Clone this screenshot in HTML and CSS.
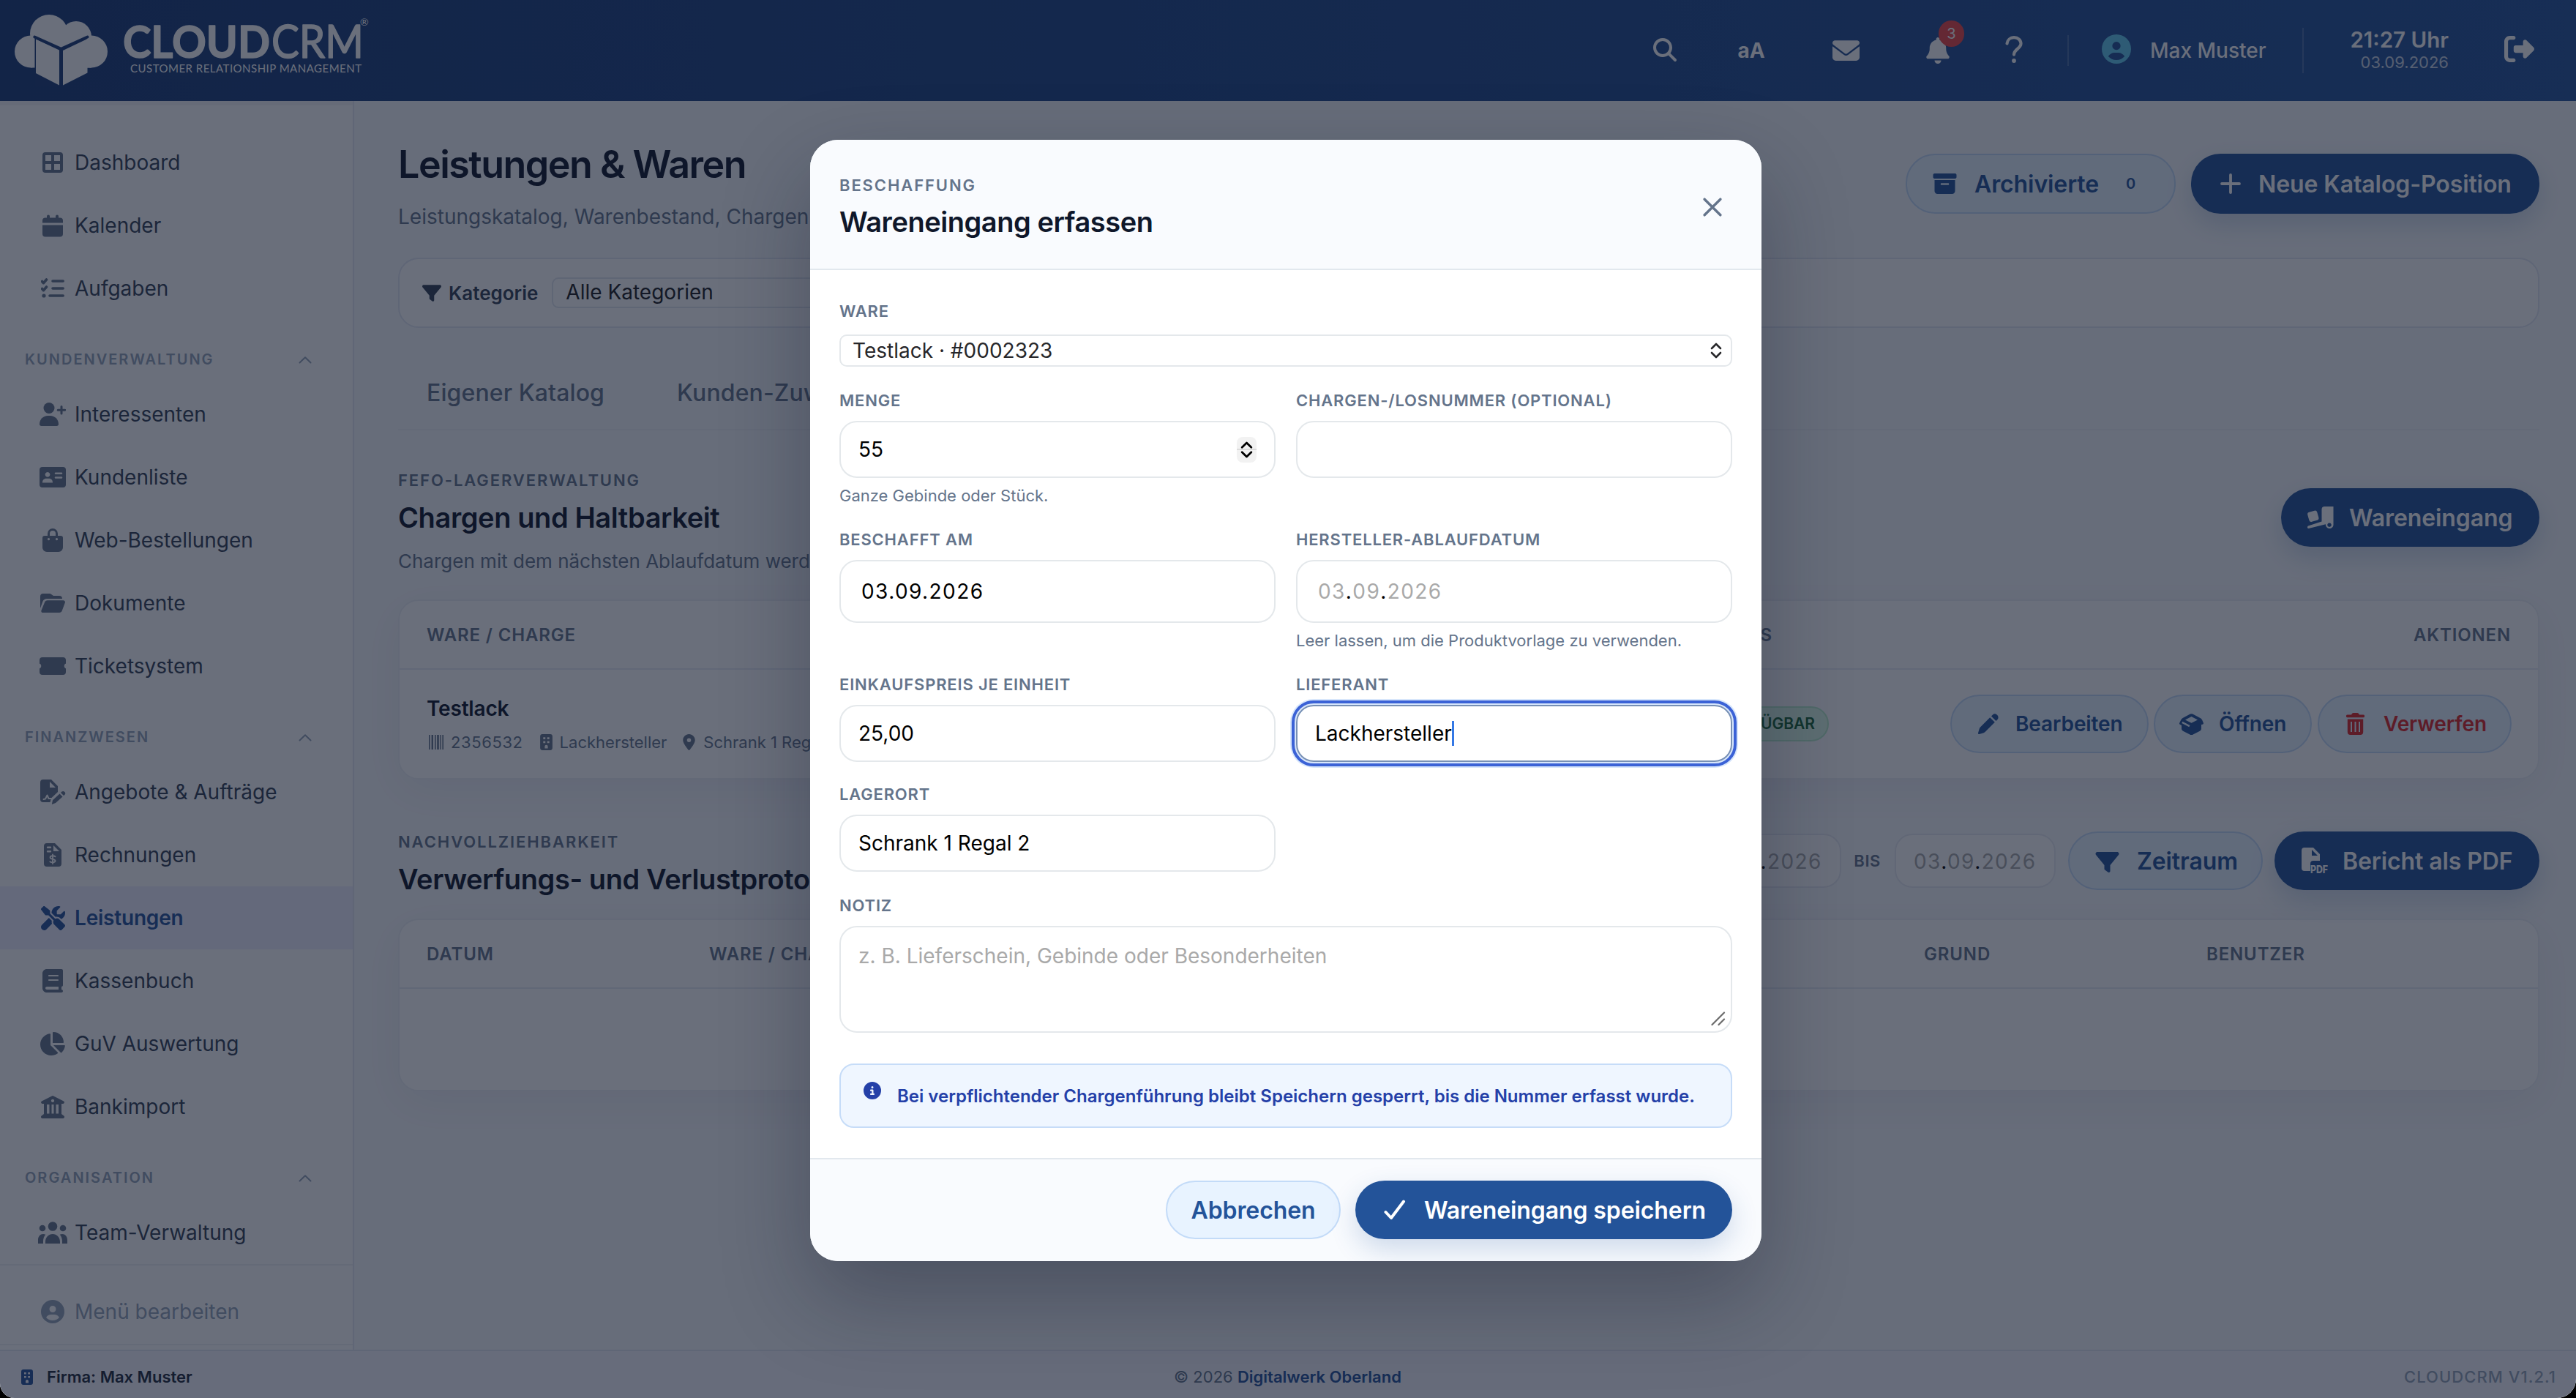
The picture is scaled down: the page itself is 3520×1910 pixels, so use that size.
FILE: index.html
```html
<!DOCTYPE html>
<html lang="de">
<head>
<meta charset="utf-8">
<title>CloudCRM – Leistungen &amp; Waren</title>
<link rel="stylesheet" href="styles.css">
</head>
<body>
<svg class="sprite" aria-hidden="true">
  <symbol id="i-search" viewBox="0 0 512 512"><path d="M416 208c0 45.900-14.900 88.300-40 122.700L502.600 457.400c12.500 12.500 12.500 32.800 0 45.300s-32.800 12.500-45.300 0L330.700 376c-34.400 25.200-76.800 40-122.700 40C93.100 416 0 322.900 0 208S93.100 0 208 0S416 93.100 416 208zM208 352a144 144 0 1 0 0-288 144 144 0 1 0 0 288z"/></symbol>
  <symbol id="i-mail" viewBox="0 64 512 384"><path d="M48 64C21.500 64 0 85.500 0 112c0 15.100 7.100 29.300 19.200 38.400L236.800 313.600c11.400 8.500 27 8.500 38.400 0L492.800 150.400c12.100-9.100 19.200-23.300 19.200-38.400c0-26.500-21.500-48-48-48L48 64zM0 176L0 384c0 35.300 28.700 64 64 64l384 0c35.300 0 64-28.700 64-64l0-208L294.400 339.200c-22.800 17.100-54 17.100-76.800 0L0 176z"/></symbol>
  <symbol id="i-bell" viewBox="0 0 448 512"><path d="M224 0c-17.700 0-32 14.300-32 32l0 19.200C119 66 64 130.600 64 208l0 18.800c0 47-17.300 92.400-48.500 127.600l-7.400 8.300c-8.400 9.400-10.400 22.900-5.300 34.400S19.400 416 32 416l384 0c12.600 0 24-7.400 29.200-18.900s3.100-25-5.300-34.400l-7.400-8.300C401.300 319.200 384 273.900 384 226.800l0-18.800c0-77.400-55-142-128-156.800L256 32c0-17.700-14.300-32-32-32zm45.300 493.300c12-12 18.700-28.300 18.700-45.300l-64 0-64 0c0 17 6.700 33.300 18.700 45.300s28.300 18.700 45.300 18.700s33.300-6.700 45.300-18.700z"/></symbol>
  <symbol id="i-question" viewBox="0 0 24 38"><path d="M2.500 10.500C3 5.500 7 2.200 12 2.200c5.500 0 9.500 3.600 9.500 8.400 0 7-9.500 7.400-9.500 15" fill="none" stroke="currentColor" stroke-width="4.200" stroke-linecap="round"/><circle cx="12" cy="34" r="2.900"/></symbol>
  <symbol id="i-user-circle" viewBox="0 0 512 512"><path d="M399 384.200C376.900 345.800 335.400 320 288 320l-64 0c-47.400 0-88.900 25.800-111 64.200c35.200 39.200 86.200 63.800 143 63.800s107.800-24.700 143-63.800zM0 256a256 256 0 1 1 512 0A256 256 0 1 1 0 256zm256 16a72 72 0 1 0 0-144 72 72 0 1 0 0 144z"/></symbol>
  <symbol id="i-logout" viewBox="0 32 512 448"><path d="M377.900 105.900L500.700 228.700c7.200 7.200 11.300 17.100 11.300 27.300s-4.100 20.100-11.300 27.300L377.900 406.100c-6.400 6.400-15 9.900-24 9.900c-18.700 0-33.900-15.200-33.900-33.900l0-62.100-128 0c-17.700 0-32-14.300-32-32l0-64c0-17.700 14.300-32 32-32l128 0 0-62.100c0-18.700 15.200-33.900 33.900-33.900c9 0 17.600 3.600 24 9.900zM160 96L96 96c-17.700 0-32 14.300-32 32l0 256c0 17.700 14.300 32 32 32l64 0c17.700 0 32 14.300 32 32s-14.300 32-32 32l-64 0c-53 0-96-43-96-96L0 128C0 75 43 32 96 32l64 0c17.700 0 32 14.300 32 32s-14.300 32-32 32z"/></symbol>
  <symbol id="i-grid" viewBox="0 0 28 28"><path fill-rule="evenodd" d="M4 0h20a4 4 0 0 1 4 4v20a4 4 0 0 1-4 4H4a4 4 0 0 1-4-4V4a4 4 0 0 1 4-4zM4 4v8h8V4zM16 4v8h8V4zM4 16v8h8v-8zM16 16v8h8v-8z"/></symbol>
  <symbol id="i-calendar" viewBox="0 0 28 30"><path d="M6 2a2 2 0 0 1 4 0v2h8V2a2 2 0 0 1 4 0v2h2a4 4 0 0 1 4 4v3H0V8a4 4 0 0 1 4-4h2zM0 14h28v12a4 4 0 0 1-4 4H4a4 4 0 0 1-4-4z"/></symbol>
  <symbol id="i-tasks" viewBox="0 0 32 28"><path d="M1.500 4.500l2 2.200L7.500 2M1.500 14.500l2 2.200L7.500 12M16 4h14.200M16 14h14.200M12 24h18.200" fill="none" stroke="currentColor" stroke-width="3.600" stroke-linecap="round" stroke-linejoin="round"/><circle cx="4" cy="24" r="2.600"/></symbol>
  <symbol id="i-user-plus" viewBox="0 0 36 32"><circle cx="13" cy="7.500" r="7.500"/><path d="M0 29.500C0 23 5 18 11.500 18h3C21 18 26 23 26 29.500c0 1.400-1 2.500-2.500 2.500h-21C1 32 0 30.900 0 29.500z"/><path d="M30 5.500v9.500M25.200 10.200h9.500" stroke="currentColor" stroke-width="3" stroke-linecap="round"/></symbol>
  <symbol id="i-id" viewBox="0 0 36 28"><path fill-rule="evenodd" d="M4 0h28a4 4 0 0 1 4 4v20a4 4 0 0 1-4 4H4a4 4 0 0 1-4-4V4a4 4 0 0 1 4-4zM11 7a3.400 3.400 0 1 0 .01 0zM4 21.500h14c0-3.500-2-5.700-5-5.700H9c-3 0-5 2.200-5 5.700zM22 7.500a1 1 0 0 0 0 2.600h8a1 1 0 0 0 0-2.600zM22 13.200a1 1 0 0 0 0 2.600h8a1 1 0 0 0 0-2.600z"/></symbol>
  <symbol id="i-bag" viewBox="0 0 28 32"><path fill-rule="evenodd" d="M7 10V7a7 7 0 0 1 14 0v3h4a3 3 0 0 1 3 3v13a6 6 0 0 1-6 6H6a6 6 0 0 1-6-6V13a3 3 0 0 1 3-3zM10 10h8V7a4 4 0 0 0-8 0zM8.500 13a1.600 1.600 0 1 0 .01 0zM19.500 13a1.600 1.600 0 1 0 .01 0z"/></symbol>
  <symbol id="i-folder" viewBox="0 0 34 26"><path d="M0 20V4a4 4 0 0 1 4-4h8c1.500 0 2.500.5 3.500 1.300L18 3h8a4 4 0 0 1 4 4H9C6.500 7 4.500 8.300 3.500 10.500z"/><path d="M1.500 23L6 12c.7-1.800 2-2.800 4-2.800h21.500c1.800 0 2.900 1.500 2.300 3.200l-4 10.800c-.6 1.800-2 2.800-3.800 2.800H3.500c-1.600 0-2.600-1.500-2-3z"/></symbol>
  <symbol id="i-ticket" viewBox="0 0 36 24"><path d="M4 0h28a4 4 0 0 1 4 4v4.500a3.800 3.800 0 0 0 0 7V20a4 4 0 0 1-4 4H4a4 4 0 0 1-4-4v-4.500a3.800 3.800 0 0 0 0-7V4a4 4 0 0 1 4-4z"/></symbol>
  <symbol id="i-sign" viewBox="0 0 35 34"><path fill-rule="evenodd" d="M4 0h11l9 9v8l-9 8.500L13.500 31H4a4 4 0 0 1-4-4V4a4 4 0 0 1 4-4zM13 3v8h8z"/><path d="M4.500 27l2.500-.5 2.500-5 2 4.500h3.500" fill="none" stroke="#fff" stroke-width="2" stroke-linecap="round" stroke-linejoin="round"/><path d="M17 28.200L26.500 19.500l4 4L21 32l-5.200 2zM28 18l1.500-1.500c2.500-2 6.500 1.500 4 4.200L32 22z"/></symbol>
  <symbol id="i-invoice" viewBox="0 0 24 32"><path fill-rule="evenodd" d="M4 0h11l9 9v19a4 4 0 0 1-4 4H4a4 4 0 0 1-4-4V4a4 4 0 0 1 4-4zM13 3v8h8zM5 4.500a1.200 1.200 0 0 0 0 2.400h4a1.200 1.200 0 0 0 0-2.400zM5 10a1.200 1.200 0 0 0 0 2.400h4A1.200 1.200 0 0 0 9 10z"/><path d="M15.500 18.300c-1-.8-2.200-1-3.500-1-2 0-3.400.8-3.400 2.200 0 3.400 6.900 1.400 6.900 4.600 0 1.500-1.500 2.200-3.500 2.200-1.300 0-2.600-.3-3.600-1.100M12 15.500v12.500" fill="none" stroke="#fff" stroke-width="1.900" stroke-linecap="round"/></symbol>
  <symbol id="i-tools" viewBox="0 0 512 512"><path d="M78.600 5C69.100-2.400 55.600-1.500 47 7L7 47c-8.500 8.500-9.400 22-2.100 31.600l80 104c4.500 5.900 11.600 9.400 19 9.400l54.100 0 109 109c-14.700 29-10 65.400 14.300 89.600l112 112c12.500 12.500 32.800 12.500 45.300 0l64-64c12.500-12.500 12.500-32.800 0-45.300l-112-112c-24.200-24.200-60.600-29-89.600-14.300l-109-109 0-54.100c0-7.500-3.500-14.500-9.400-19L78.600 5zM19.900 396.100C7.200 408.800 0 426.100 0 444.100C0 481.600 30.400 512 67.900 512c18 0 35.300-7.200 48-19.900L233.700 374.300c-7.800-20.900-9-43.600-3.600-65.100l-61.700-61.700L19.900 396.100zM512 144c0-10.500-1.100-20.700-3.200-30.500c-2.400-11.200-16.100-14.100-24.200-6l-63.900 63.900c-3 3-7.100 4.700-11.300 4.700L352 176c-8.800 0-16-7.200-16-16l0-57.400c0-4.200 1.700-8.300 4.700-11.300l63.900-63.900c8.100-8.100 5.200-21.800-6-24.200C388.700 1.100 378.500 0 368 0C288.500 0 224 64.500 224 144l0 .8 85.300 85.300c36-9.100 75.800 .5 104 28.700L429 274.500c49-23 83-72.800 83-130.500z"/></symbol>
  <symbol id="i-book" viewBox="0 0 448 512"><path d="M96 0C43 0 0 43 0 96L0 416c0 53 43 96 96 96l288 0 32 0c17.700 0 32-14.300 32-32s-14.300-32-32-32l0-64c17.700 0 32-14.300 32-32l0-320c0-17.700-14.300-32-32-32L384 0 96 0zm0 384l256 0 0 64L96 448c-17.700 0-32-14.300-32-32s14.300-32 32-32zm32-240c0-8.800 7.200-16 16-16l192 0c8.800 0 16 7.200 16 16s-7.200 16-16 16l-192 0c-8.800 0-16-7.200-16-16zm16 78l192 0c8.800 0 16 7.200 16 16s-7.200 16-16 16l-192 0c-8.800 0-16-7.200-16-16s7.200-16 16-16z"/></symbol>
  <symbol id="i-pie" viewBox="32 0 544 512"><path d="M304 240l0-223.400c0-9 7-16.600 16-16.600C443.700 0 544 100.300 544 224c0 9-7.600 16-16.600 16L304 240zM32 272C32 150.700 122.100 50.300 239 34.300c9.200-1.300 17 6.100 17 15.400L256 288 412.500 444.500c6.700 6.700 6.200 17.700-1.500 23.100C371.800 495.600 323.800 512 272 512C139.500 512 32 404.600 32 272zm526.400 16c9.300 0 16.600 7.800 15.400 17c-7.700 55.900-34.600 105.600-73.900 142.300c-6 5.600-15.400 5.200-21.200-.7L320 288l238.400 0z"/></symbol>
  <symbol id="i-bank" viewBox="0 0 32 31"><path fill-rule="evenodd" d="M14.800.4a2.600 2.600 0 0 1 2.400 0L31 7.500c1.600.9 1 3.500-1 3.500H28v14l3.300 2.400c1.500 1.300.7 3.600-1.300 3.600H2c-2 0-2.800-2.300-1.300-3.600L4 25V11H2C0 11 -.6 8.400 1 7.500zM16 4.800a2.100 2.100 0 1 0 .01 0zM8 12v12.500h3.500V12zM14.500 12v12.500h3V12zM20.500 12v12.500H24V12z"/></symbol>
  <symbol id="i-team" viewBox="0 0 40 30"><circle cx="20" cy="6.500" r="6.300"/><circle cx="6" cy="9" r="4.300"/><circle cx="34" cy="9" r="4.300"/><path d="M10 30v-2.500C10 21.500 14.500 17 20 17s10 4.500 10 10.500V30zM0 30v-5c0-4.600 3-8 7-8 1.200 0 2.300.3 3.200.8C8 20.300 7 23.500 7 27v3zM40 30v-5c0-4.600-3-8-7-8-1.200 0-2.300.3-3.200.8C32 20.300 33 23.500 33 27v3z"/></symbol>
  <symbol id="i-chevron" viewBox="0 0 18 11"><path d="M1.500 9.500L9 2.200l7.500 7.300" fill="none" stroke="currentColor" stroke-width="2" stroke-linecap="round" stroke-linejoin="round"/></symbol>
  <symbol id="i-building" viewBox="0 0 16 21"><path fill-rule="evenodd" d="M3 0h10a3 3 0 0 1 3 3v15a3 3 0 0 1-3 3H3a3 3 0 0 1-3-3V3a3 3 0 0 1 3-3zM4 4v2.600h2.800V4zM9.200 4v2.600H12V4zM4 9v2.600h2.800V9zM9.200 9v2.600H12V9zM6 18.500h4V16a2 2 0 0 0-4 0z"/></symbol>
  <symbol id="i-archive" viewBox="0 32 512 448"><path d="M32 32l448 0c17.700 0 32 14.300 32 32l0 48c0 17.700-14.300 32-32 32L32 144C14.300 144 0 129.700 0 112L0 64C0 46.300 14.300 32 32 32zm0 144l448 0 0 240c0 35.300-28.700 64-64 64L96 480c-35.300 0-64-28.700-64-64l0-240zm132 88c0 12 8 20 20 20l144 0c12 0 20-8 20-20s-8-20-20-20l-144 0c-12 0-20 8-20 20z"/></symbol>
  <symbol id="i-plus" viewBox="0 0 28 28"><path d="M14 2v24M2 14h24" stroke="currentColor" stroke-width="3.800" stroke-linecap="round"/></symbol>
  <symbol id="i-filter" viewBox="0 32 512 448"><path d="M3.900 54.900C10.500 40.900 24.500 32 40 32l432 0c15.500 0 29.500 8.900 36.100 22.900s4.600 30.500-5.200 42.500L320 320.900 320 448c0 12.100-6.800 23.200-17.700 28.600s-23.800 4.300-33.500-3l-64-48c-8.100-6-12.800-15.500-12.800-25.600l0-79.100L9 97.300C-.7 85.400-2.800 68.800 3.900 54.900z"/></symbol>
  <symbol id="i-truck" viewBox="0 0 36 30"><path fill-rule="evenodd" d="M24 0h12v25.500a5 5 0 1 1-10.500-1.300L2.300 29.900C.6 30.300-.4 27.400 1.500 26.600L20 20.500V4a4 4 0 0 1 4-4zM30.500 22.500a2.700 2.700 0 1 0 .01 0z"/><rect x="1.500" y="6.500" width="13.500" height="13.500" rx="3" transform="rotate(-16 8 13)"/></symbol>
  <symbol id="i-barcode" viewBox="0 0 20 20"><path d="M0 0h1.600v20H0zM3.600 0h2.400v20H3.600zM8 0h1.600v20H8zM11.200 0h2.600v20h-2.600zM15.200 0h1.400v20h-1.400zM18.400 0H20v20h-1.600z"/></symbol>
  <symbol id="i-pin" viewBox="0 0 384 512"><path d="M215.700 499.200C267 435 384 279.400 384 192C384 86 298 0 192 0S0 86 0 192c0 87.400 117 243 168.300 307.200c12.300 15.300 35.100 15.300 47.400 0zM192 128a64 64 0 1 1 0 128 64 64 0 1 1 0-128z"/></symbol>
  <symbol id="i-pen" viewBox="0 0 28 28"><path d="M16.200 5.200l6.600 6.600-13 13c-.8.800-1.700 1.300-2.800 1.600L1.500 28c-1 .2-1.800-.5-1.500-1.500l1.600-5.600c.3-1 .8-2 1.600-2.700zM18 3.400l2-2c4-3.500 10 2.500 6.500 6.600l-2 2z"/></symbol>
  <symbol id="i-boxopen" viewBox="0 0 33 29"><path fill-rule="evenodd" d="M14.800.6a3.600 3.600 0 0 1 3.400 0L28.500 6c1.200.6 2.200 1.800 2.800 3l1.400 3.300c.6 1.300 0 2.300-1.200 2.500L30 15v5.500c0 1.400-.7 2.500-2 3.200l-9.800 5a3.600 3.600 0 0 1-3.400 0l-9.800-5c-1.300-.7-2-1.800-2-3.200V16l-1.800-1c-1.100-.6-1.500-1.500-.9-2.600L2 9c.6-1.300 1.400-2.300 2.600-3zM16.500 4L8 8.400l8.500 4.300L25 8.400zM4.300 10.700l-1 2.300 10 5.200 1.200-2.300z"/></symbol>
  <symbol id="i-trash" viewBox="0 0 25 30"><path fill-rule="evenodd" d="M7 2.600L8 .9C8.400.3 9 0 9.700 0h5.600c.7 0 1.300.3 1.700.9l1 1.700h5.300a1.800 1.800 0 0 1 0 3.600H1.700a1.800 1.800 0 0 1 0-3.600zM1.800 8.500h21.400V26a4 4 0 0 1-4 4H5.800a4 4 0 0 1-4-4zM6 12v14h2V12zM11.500 12v14h2V12zM17 12v14h2V12z"/></symbol>
  <symbol id="i-pdf" viewBox="0 0 36 36"><path fill-rule="evenodd" d="M4 0h12l9 9v9h-9a4 4 0 0 0-4 4v10H4a4 4 0 0 1-4-4V4a4 4 0 0 1 4-4zM14 3v8h8z"/><text x="12" y="35" class="pdf-label" textLength="24" lengthAdjust="spacingAndGlyphs">PDF</text></symbol>
  <symbol id="i-updown" viewBox="0 0 16 22"><path d="M2 8l6-6 6 6M2 14l6 6 6-6" fill="none" stroke="currentColor" stroke-width="2.600" stroke-linecap="round" stroke-linejoin="round"/></symbol>
  <symbol id="i-close" viewBox="0 0 24 24"><path d="M2 2l20 20M22 2L2 22" stroke="currentColor" stroke-width="3.200" stroke-linecap="round"/></symbol>
  <symbol id="i-check" viewBox="0 0 30 28"><path d="M2.500 17l7.500 8L27 2.500" fill="none" stroke="currentColor" stroke-width="4" stroke-linecap="round" stroke-linejoin="round"/></symbol>
  <symbol id="i-info" viewBox="0 0 512 512"><path d="M256 512A256 256 0 1 0 256 0a256 256 0 1 0 0 512zM216 336l24 0 0-64-24 0c-13.300 0-24-10.700-24-24s10.700-24 24-24l48 0c13.300 0 24 10.700 24 24l0 88 8 0c13.300 0 24 10.700 24 24s-10.700 24-24 24l-80 0c-13.300 0-24-10.700-24-24s10.700-24 24-24zm40-208a32 32 0 1 1 0 64 32 32 0 1 1 0-64z"/></symbol>
  <symbol id="i-grip" viewBox="0 0 20 20"><path d="M1.500 18L18 1.500M10.500 18L18 10.500" stroke="currentColor" stroke-width="2.200" stroke-linecap="round"/></symbol>
</svg>

<div class="app">
  <header class="topbar">
    <div class="logo">
      <svg class="logo-mark" viewBox="0 0 127 97">
        <g fill="#fff"><circle cx="22" cy="50.500" r="22"/><circle cx="47" cy="26" r="26"/><circle cx="84" cy="30" r="21"/><circle cx="105" cy="50.500" r="22"/><path d="M22 30h83v42.500H22z"/></g>
        <path class="logo-cut" d="M27.500 97V31.500L63 46.500 98.500 31.500V56L63 97z"/>
        <path d="M27.500 29L64 46 100 30.500V54H27.500z" fill="#fff" opacity="0"/>
        <path d="M29 33.500L61 48.500V96.500L29 80zM66 49L99.500 33V79.500L66 96.500z" fill="#fff"/>
        <path d="M98.500 34.500h6V72.500h-6z" fill="#fff"/>
        <path d="M27.300 30.500L63.500 46.800 99.500 30.500" class="logo-line"/>
      </svg>
      <svg class="logo-word" viewBox="0 0 340 80">
        <text x="1" y="59" class="lw-cloud" textLength="201" lengthAdjust="spacingAndGlyphs">CLOUD</text>
        <text x="204" y="59" class="lw-crm" textLength="126" lengthAdjust="spacingAndGlyphs">CRM</text>
        <text x="11" y="79" class="lw-sub" textLength="316" lengthAdjust="spacing">CUSTOMER RELATIONSHIP MANAGEMENT</text>
        <text x="325" y="15" class="lw-reg">®</text>
      </svg>
    </div>
    <div class="tools">
      <div class="slot slot-search"><svg class="ic s32"><use href="#i-search"/></svg></div>
      <div class="slot slot-aa">aA</div>
      <div class="slot slot-mail"><svg class="ic s-mail"><use href="#i-mail"/></svg></div>
      <div class="slot slot-bell"><svg class="ic s-bell"><use href="#i-bell"/></svg><span class="bell-badge">3</span></div>
      <div class="slot slot-q"><svg class="ic s-q"><use href="#i-question"/></svg></div>
      <i class="vline short"></i>
      <svg class="ic avatar"><use href="#i-user-circle"/></svg>
      <span class="user">Max Muster</span>
      <i class="vline long"></i>
      <div class="clock"><b>21:27 Uhr</b><span>03.09.2026</span></div>
      <svg class="ic logout"><use href="#i-logout"/></svg>
    </div>
  </header>

  <div class="middle">
    <nav class="side">
      <a class="nav"><span class="ni"><svg class="ic" style="width:28px;height:28px"><use href="#i-grid"/></svg></span>Dashboard</a>
      <a class="nav"><span class="ni"><svg class="ic" style="width:28px;height:31px"><use href="#i-calendar"/></svg></span>Kalender</a>
      <a class="nav"><span class="ni"><svg class="ic" style="width:32px;height:28px"><use href="#i-tasks"/></svg></span>Aufgaben</a>
      <div class="nav-head">KUNDENVERWALTUNG<svg class="ic chev"><use href="#i-chevron"/></svg></div>
      <a class="nav"><span class="ni"><svg class="ic" style="width:36px;height:32px"><use href="#i-user-plus"/></svg></span>Interessenten</a>
      <a class="nav"><span class="ni"><svg class="ic" style="width:36px;height:28px"><use href="#i-id"/></svg></span>Kundenliste</a>
      <a class="nav"><span class="ni"><svg class="ic" style="width:28px;height:32px"><use href="#i-bag"/></svg></span>Web-Bestellungen</a>
      <a class="nav"><span class="ni"><svg class="ic" style="width:34px;height:26px"><use href="#i-folder"/></svg></span>Dokumente</a>
      <a class="nav"><span class="ni"><svg class="ic" style="width:36px;height:24px"><use href="#i-ticket"/></svg></span>Ticketsystem</a>
      <div class="nav-head">FINANZWESEN<svg class="ic chev"><use href="#i-chevron"/></svg></div>
      <a class="nav"><span class="ni"><svg class="ic" style="width:35px;height:34px"><use href="#i-sign"/></svg></span>Angebote &amp; Aufträge</a>
      <a class="nav"><span class="ni"><svg class="ic" style="width:24px;height:32px"><use href="#i-invoice"/></svg></span>Rechnungen</a>
      <a class="nav active"><span class="ni"><svg class="ic" style="width:33px;height:33px"><use href="#i-tools"/></svg></span>Leistungen</a>
      <a class="nav"><span class="ni"><svg class="ic" style="width:28px;height:32px"><use href="#i-book"/></svg></span>Kassenbuch</a>
      <a class="nav"><span class="ni"><svg class="ic" style="width:34px;height:32px"><use href="#i-pie"/></svg></span>GuV Auswertung</a>
      <a class="nav"><span class="ni"><svg class="ic" style="width:32px;height:31px"><use href="#i-bank"/></svg></span>Bankimport</a>
      <div class="nav-head">ORGANISATION<svg class="ic chev"><use href="#i-chevron"/></svg></div>
      <a class="nav"><span class="ni"><svg class="ic" style="width:40px;height:30px"><use href="#i-team"/></svg></span>Team-Verwaltung</a>
      <div class="nav-edit"><span class="ni"><svg class="ic" style="width:32px;height:32px"><use href="#i-user-circle"/></svg></span>Menü bearbeiten</div>
    </nav>

    <main class="main">
      <div class="page-head">
        <div>
          <h1>Leistungen &amp; Waren</h1>
          <p class="sub">Leistungskatalog, Warenbestand, Chargen</p>
        </div>
        <div class="head-actions">
          <button class="btn soft b-arch"><svg class="ic"><use href="#i-archive"/></svg>Archivierte<small>0</small></button>
          <button class="btn primary b-new"><svg class="ic"><use href="#i-plus"/></svg>Neue Katalog-Position</button>
        </div>
      </div>
      <div class="filter">
        <svg class="ic f-ic"><use href="#i-filter"/></svg><b>Kategorie</b>
        <div class="mini-select">Alle Kategorien</div>
      </div>
      <div class="tabs"><span>Eigener Katalog</span><span>Kunden-Zuweisung</span></div>

      <section class="sec sec1">
        <div>
          <div class="eyebrow">FEFO-LAGERVERWALTUNG</div>
          <h2>Chargen und Haltbarkeit</h2>
          <p class="sec-text">Chargen mit dem nächsten Ablaufdatum werden</p>
        </div>
        <button class="btn primary b-in"><svg class="ic"><use href="#i-truck"/></svg>Wareneingang</button>
      </section>
      <div class="table t1">
        <div class="thead"><span>WARE / CHARGE</span><span class="th-status">STATUS</span><span class="th-act">AKTIONEN</span></div>
        <div class="trow">
          <div class="ware">
            <b>Testlack</b>
            <div class="meta"><svg class="ic m1"><use href="#i-barcode"/></svg><span class="num">2356532</span><svg class="ic m2"><use href="#i-building"/></svg><span>Lackhersteller</span><svg class="ic m3"><use href="#i-pin"/></svg><span>Schrank 1 Regal 2</span></div>
          </div>
          <div class="acts">
            <span class="pill">VERFÜGBAR</span>
            <button class="btn soft sm b-edit"><svg class="ic"><use href="#i-pen"/></svg>Bearbeiten</button>
            <button class="btn soft sm b-open"><svg class="ic"><use href="#i-boxopen"/></svg>Öffnen</button>
            <button class="btn soft sm danger b-del"><svg class="ic"><use href="#i-trash"/></svg>Verwerfen</button>
          </div>
        </div>
      </div>

      <section class="sec sec2">
        <div>
          <div class="eyebrow">NACHVOLLZIEHBARKEIT</div>
          <h2>Verwerfungs- und Verlustprotokoll</h2>
        </div>
        <div class="range">
          <div class="date">03<i>.</i>09<i>.</i>2026</div>
          <span class="bis">BIS</span>
          <div class="date">03<i>.</i>09<i>.</i>2026</div>
          <button class="btn soft b-range"><svg class="ic"><use href="#i-filter"/></svg>Zeitraum</button>
          <button class="btn primary b-pdf"><svg class="ic"><use href="#i-pdf"/></svg>Bericht als PDF</button>
        </div>
      </section>
      <div class="table t2">
        <div class="thead"><span>DATUM</span><span>WARE / CHARGE</span><span class="th-grund">GRUND</span><span>BENUTZER</span></div>
      </div>
    </main>
  </div>

  <footer class="foot">
    <div class="f-left"><svg class="ic"><use href="#i-building"/></svg>Firma: Max Muster</div>
    <div class="f-mid">© 2026 <b>Digitalwerk Oberland</b></div>
    <div class="f-right">CLOUDCRM V1.2.1</div>
  </footer>

  <div class="overlay">
    <div class="modal">
      <div class="m-head">
        <div>
          <div class="m-eyebrow">BESCHAFFUNG</div>
          <h3>Wareneingang erfassen</h3>
        </div>
        <svg class="ic m-close"><use href="#i-close"/></svg>
      </div>
      <div class="m-body">
        <div class="field"><label>WARE</label><div class="select">Testlack · #0002323<svg class="ic"><use href="#i-updown"/></svg></div></div>
        <div class="cols">
          <div class="field"><label>MENGE</label><div class="input">55<span class="spin"><svg class="ic"><use href="#i-updown"/></svg></span></div><p class="help">Ganze Gebinde oder Stück.</p></div>
          <div class="field"><label>CHARGEN-/LOSNUMMER (OPTIONAL)</label><div class="input"></div></div>
        </div>
        <div class="cols">
          <div class="field"><label>BESCHAFFT AM</label><div class="input dt">03.09.2026</div></div>
          <div class="field"><label>HERSTELLER-ABLAUFDATUM</label><div class="input dt empty">03<i>.</i>09<i>.</i>2026</div><p class="help">Leer lassen, um die Produktvorlage zu verwenden.</p></div>
        </div>
        <div class="cols">
          <div class="field"><label>EINKAUFSPREIS JE EINHEIT</label><div class="input">25,00</div></div>
          <div class="field"><label>LIEFERANT</label><div class="input focus">Lackhersteller<i class="caret"></i></div></div>
        </div>
        <div class="cols tight">
          <div class="field"><label>LAGERORT</label><div class="input">Schrank 1 Regal 2</div></div>
        </div>
        <div class="field"><label>NOTIZ</label><div class="area">z. B. Lieferschein, Gebinde oder Besonderheiten<svg class="ic"><use href="#i-grip"/></svg></div></div>
        <div class="note"><svg class="ic"><use href="#i-info"/></svg>Bei verpflichtender Chargenführung bleibt Speichern gesperrt, bis die Nummer erfasst wurde.</div>
      </div>
      <div class="m-foot">
        <button class="btn soft b-cancel">Abbrechen</button>
        <button class="btn primary b-save"><svg class="ic"><use href="#i-check"/></svg>Wareneingang speichern</button>
      </div>
    </div>
  </div>
</div>
</body>
</html>
```
FILE: styles.css
```css
*{box-sizing:border-box}
html,body{margin:0;height:100%}
body{background:#000;font-family:Inter,"Liberation Sans",sans-serif;font-size:28px;color:#0f172a}
h1,h2,h3,p{margin:0}
button{font:inherit;border:0;margin:0}
.sprite{position:absolute;width:0;height:0}
.ic{display:block;flex:none;fill:currentColor}

.app{position:relative;width:3520px;height:1910px;display:flex;flex-direction:column;overflow:hidden;background:#f8fafc;border-radius:0 0 26px 20px}

/* Top bar */
.topbar{height:138px;flex:none;display:flex;justify-content:space-between;color:#fff;background:linear-gradient(90deg,#1a3b77,#25549c)}
.logo{display:flex;padding:20px 0 0 20px}
.logo-mark{width:127px;height:97px}
.logo-cut{fill:#1b3c78}
.logo-line{fill:none;stroke:#1b3c78;stroke-width:4;stroke-linecap:round;stroke-linejoin:round}
.logo-word{width:340px;height:80px;margin-left:20px;fill:#fff}
.lw-cloud{font:700 62px Lato,sans-serif;stroke:#fff;stroke-width:1.500px;stroke-linejoin:round}
.lw-crm{font:400 62px Lato,sans-serif;stroke:#fff;stroke-width:1.500px;stroke-linejoin:round}
.lw-sub{font:400 15px Lato,sans-serif}
.lw-reg{font:400 14px Lato,sans-serif}
.tools{display:flex;align-items:center;padding-right:57px}
.slot{position:relative;display:flex;align-items:center;justify-content:center;height:138px}
.slot-search{width:116px}
.s32{width:32px;height:32px;margin-top:-3px}
.slot-aa{width:120px;font-size:28px;font-weight:700}
.slot-mail{width:138px}
.s-mail{width:37px;height:28px}
.slot-bell{width:114px}
.s-bell{width:32px;height:36px}
.bell-badge{position:absolute;left:58px;top:28px;width:35px;height:36px;border-radius:18px;background:#ef4444;font-size:20px;line-height:36px;text-align:center}
.slot-q{width:94px}
.s-q{width:24px;height:38px;margin-top:-2px}
.vline{width:2px;background:rgba(255,255,255,.18)}
.vline.short{height:42px;margin-left:26px}
.vline.long{height:62px;margin-left:49px}
.avatar{width:40px;height:40px;margin-left:45px;margin-top:-4px;color:#62cbee}
.user{margin-left:26px;font-weight:500;width:159px;white-space:nowrap}
.clock{width:198px;display:flex;flex-direction:column;text-align:right;padding-bottom:2px}
.clock b{font-size:29.500px;font-weight:600;line-height:34px}
.clock span{font-size:22px;line-height:28px;opacity:.75}
.logout{width:41px;height:36px;margin-left:76px;margin-top:-4px}

/* Sidebar */
.middle{flex:1;display:flex;min-height:0}
.side{width:484px;flex:none;background:#fff;border-right:2px solid #e5e7f1;padding-top:41px;box-shadow:inset 0 6px 0 #f3f4f6}
.nav,.nav-edit{display:flex;align-items:center;height:86px;padding-left:52px;color:#334155}
.ni{width:40px;margin-right:10px;display:flex;justify-content:center;color:#64748b}
.active{background:#eef0ff;color:#25539c;font-weight:600;letter-spacing:-.2px}
.active .ni{color:#25539c}
.nav-head{height:86px;padding:22px 56px 0 34px;display:flex;align-items:center;justify-content:space-between;font-size:20px;font-weight:600;letter-spacing:2px;color:#94a3b8}
.chev{width:18px;height:11px}
.nav-edit{height:111px;padding-top:18px;border-top:2px solid #eff1f5;border-bottom:2px solid #eff1f5;color:#94a3b8}
.nav-edit .ni{color:#94a3b8}

/* Content */
.main{flex:1;padding:56px 50px 0 60px;min-width:0}
.page-head{height:158px;display:flex;justify-content:space-between;white-space:nowrap}
h1{font-size:52px;line-height:62px;font-weight:600;letter-spacing:-1.500px}
.sub{margin-top:20px;line-height:40px;color:#64748b}
.head-actions{display:flex;gap:21px;padding-top:16px}
.btn{display:flex;align-items:center;height:80px;border-radius:40px;padding:0;font-size:32px;font-weight:600;letter-spacing:-.1px;white-space:nowrap}
.primary{background:#235399;color:#fff;box-shadow:0 14px 36px rgba(35,83,153,.2)}
.soft{background:#e8f3ff;color:#235399;border:2px solid #c3dbf8}
.sm{font-size:28px}
.danger{color:#dc2626}
.b-arch,.b-new{height:82px}
.b-arch{width:369px;padding-left:35px}
.b-arch .ic{width:33px;height:28px;margin-right:24px}
.b-arch small{font-size:20px;margin-left:37px}
.b-new{width:476px;padding-left:40px}
.b-new .ic{width:28px;height:28px;margin-right:24px}
.filter{height:96px;border:2px solid #e2e6f2;border-radius:28px;background:#fff;display:flex;align-items:center;padding-left:31px}
.f-ic{width:26px;height:23px;margin-right:10px;color:#334155}
.filter b{font-size:26px;font-weight:600;color:#334155}
.mini-select{width:520px;height:42px;margin-left:19px;border:2px solid #e2e6ee;border-radius:9px;padding-left:17px;line-height:37px;color:#1b1b20}
.tabs{height:140px;border-bottom:2px solid #f0f2f7;padding:69px 0 0 39px;display:flex;gap:99px;font-size:32px;line-height:40px;font-weight:500;letter-spacing:.1px;color:#64748b}
.sec{display:flex;justify-content:space-between;white-space:nowrap}
.sec1{height:231px;padding-top:54px}
.sec2{height:190px;padding-top:71px}
.eyebrow{font-size:22px;line-height:28px;font-weight:600;letter-spacing:1.920px;color:#64748b}
h2{margin-top:14px;font-size:38px;line-height:46px;font-weight:600;letter-spacing:-.4px}
.sec-text{margin-top:19px;font-size:26px;line-height:36px;color:#64748b}
.b-in{width:353px;margin-top:25px;padding-left:35px}
.b-in .ic{width:37px;height:30px;margin-right:21px}
.table{border:2px solid #edf0f5;border-radius:28px;background:#fff;box-shadow:0 16px 60px rgba(45,45,110,.07)}
.t1{height:246px}
.t2{height:236px}
.thead{height:94px;display:flex;align-items:center;padding:0 37px;border-bottom:2px solid #e8edf3;font-size:24px;font-weight:600;letter-spacing:.85px;color:#64748b}
.t1 .thead{justify-content:space-between}
.th-status{margin-left:auto;margin-right:876px}
.t2 .thead span{width:386px}
.t2 .thead .th-grund{margin-left:1274px}
.trow{height:148px;display:flex;justify-content:space-between;align-items:center;padding:0 36px 0 37px;white-space:nowrap}
.ware{padding-top:3px}
.ware b{display:block;font-weight:600;line-height:36px;letter-spacing:-.2px}
.meta{display:flex;align-items:center;margin-top:11px;font-size:22px;line-height:34px;color:#64748b}
.num{letter-spacing:.6px}
.m1{width:20px;height:20px;margin:0 10px 0 3px}
.m2{width:17px;height:22px;margin:0 10px 0 23px}
.m3{width:17px;height:22px;margin:0 11px 0 22px}
.acts{display:flex;align-items:center}
.pill{height:48px;margin-right:166px;padding:0 17px;border:2px solid #bbf0cd;border-radius:24px;background:#dcfce7;color:#166534;font-size:21px;font-weight:600;line-height:44px}
.b-edit{width:271px;margin-right:7px;padding-left:36px}
.b-edit .ic{width:28px;height:28px;margin-right:23px}
.b-open{width:216px;margin-right:8px;padding-left:33px}
.b-open .ic{width:33px;height:29px;margin-right:21px}
.b-del{width:265px;padding-left:37px}
.b-del .ic{width:25px;height:30px;margin-right:26px}
.range{display:flex;align-items:center;height:80px}
.date{height:74px;width:220px;border:2px solid #e8ebf2;border-radius:24px;background:#fff;padding-left:24px;line-height:73px;letter-spacing:1.420px;color:#a9a9a9}
.date i,.empty i{font-style:normal;color:#000}
.bis{margin:0 19px 0 17px;font-size:22px;font-weight:600;letter-spacing:.6px;color:#64748b}
.b-range{width:266px;margin-left:17px;padding-left:35px}
.b-range .ic{width:33px;height:28px;margin:4px 24px 0 0}
.b-pdf{width:362px;margin-left:16px;padding-left:37px}
.b-pdf .ic{width:36px;height:36px;margin-right:20px}
.pdf-label{font:800 15px Inter,sans-serif}

/* Footer bar */
.foot{height:66px;flex:none;position:relative;display:grid;grid-template-columns:1fr auto 1fr;align-items:center;border-top:2px solid #e3e8f1;padding:6px 27px 0 29px;font-size:22px;background:#f6f8fe}
.f-left{display:flex;align-items:center;font-weight:600;color:#1e293b}
.f-left .ic{width:16px;height:21px;margin-right:19px;color:#25539c}
.f-mid{color:#64748b;padding-right:3px}
.f-mid b{font-weight:600;color:#25539c}
.f-right{text-align:right;font-weight:500;letter-spacing:1.060px;color:#94a3b8}

/* Dialog */
.overlay{position:absolute;inset:0;display:flex;align-items:center;justify-content:center;padding:4px 6px 0 0;background:rgba(15,23,42,.62)}
.modal{width:1300px;height:1532px;display:flex;flex-direction:column;border-radius:38px;background:#fff;overflow:hidden;box-shadow:0 50px 120px rgba(15,23,42,.32)}
.m-head{height:178px;flex:none;display:flex;justify-content:space-between;padding:47px 54px 0 40px;background:#f9fbfe;border-bottom:2px solid #e2e8ee}
.m-eyebrow{font-size:22px;line-height:30px;font-weight:600;letter-spacing:1.900px;color:#64748b}
h3{margin-top:12px;font-size:38px;line-height:46px;font-weight:600;letter-spacing:-.45px}
.m-close{width:26px;height:26px;margin-top:32px;color:#64748b}
.m-body{flex:1;display:flex;flex-direction:column;gap:32px;padding:42px 40px 0}
.field{display:flex;flex-direction:column}
.cols{display:grid;grid-template-columns:1fr 1fr;gap:28px}
.tight{margin-top:-2px}
label{font-size:22px;line-height:28px;font-weight:600;letter-spacing:.820px;color:#64748b}
.select{height:44px;margin-top:18px;border:2px solid #e4e8eb;border-radius:10px;padding:0 12px 0 16px;display:flex;align-items:center;justify-content:space-between;color:#27272a}
.select .ic{width:16px;height:22px}
.input{height:78px;margin-top:14px;border:2px solid #e4e8eb;border-radius:24px;padding:0 24px;display:flex;align-items:center;color:#000}
.dt{height:86px;padding-left:28px;letter-spacing:1.420px}
.empty{color:#a9a9a9}
.spin{margin-left:auto;width:27px;height:35px;border-radius:8px;background:linear-gradient(#f2f2f2 16px,#dcdcdc 16px,#dcdcdc 18px,#f2f2f2 18px);display:flex;align-items:center;justify-content:center}
.spin .ic{width:17px;height:27px}
.help{margin-top:10px;font-size:22px;line-height:28px;color:#64748b}
.focus{border-color:#7790b5;outline:4px solid #3b62d6;outline-offset:2px;box-shadow:0 0 0 8px #d7e6fb}
.caret{width:3px;height:34px;background:#3478e5}
.area{position:relative;height:146px;margin-top:14px;border:2px solid #e4e8eb;border-radius:24px;padding:20px 24px;line-height:38px;color:#a9a9a9}
.area .ic{position:absolute;right:7px;bottom:7px;width:20px;height:20px;color:#6b6b6b}
.note{height:88px;margin-top:10px;border:2px solid #c6dcf8;border-radius:20px;background:#eff6ff;padding:0 31px;display:flex;align-items:center;font-size:24px;font-weight:600;color:#2440a8;white-space:nowrap}
.note .ic{width:24px;height:24px;margin:-14px 22px 0 0}
.m-foot{height:141px;flex:none;display:flex;justify-content:flex-end;gap:20px;padding:29px 40px 0;border-top:2px solid #e2e8ee;background:#f9fbfe}
.b-cancel{width:239px;justify-content:center}
.b-save{width:515px;padding-left:39px}
.b-save .ic{width:30px;height:28px;margin-right:25px}
```
